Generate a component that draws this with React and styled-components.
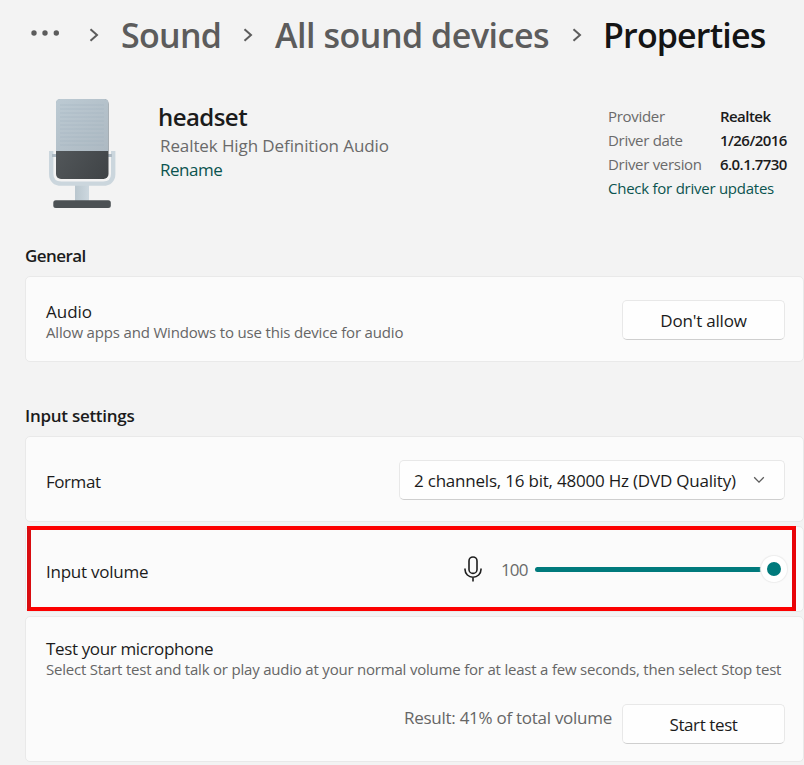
import styled, { createGlobalStyle } from "styled-components";

function App() {
    return (
        <>
            <GlobalStyle/>
            <Page>
            <Breadcrumb>
                <Dots viewBox="0 0 30 6">
                    <circle cx="3" cy="3" r="2.7"/>
                    <circle cx="14" cy="3" r="2.7"/>
                    <circle cx="25.3" cy="3" r="2.7"/>
                </Dots>
                <Separator $left={28}/>
                <Crumb $left={22} $width={101} $track={-0.7}>Sound</Crumb>
                <Separator $left={21}/>
                <Crumb $left={22} $width={276} $track={-0.47}>All sound devices</Crumb>
                <Separator $left={21}/>
                <Crumb $left={21} $width={180} $track={-0.85} $current>Properties</Crumb>
            </Breadcrumb>

            <Device>
                <MicrophoneArt/>
                <DeviceInfo>
                    <DeviceName>headset</DeviceName>
                    <DeviceModel>Realtek High Definition Audio</DeviceModel>
                    <Rename>Rename</Rename>
                </DeviceInfo>
                <Driver>
                    <DriverLabel>Provider</DriverLabel>
                    <DriverValue>Realtek</DriverValue>
                    <DriverLabel>Driver date</DriverLabel>
                    <DriverValue>1/26/2016</DriverValue>
                    <DriverLabel>Driver version</DriverLabel>
                    <DriverValue>6.0.1.7730</DriverValue>
                    <DriverLink>Check for driver updates</DriverLink>
                </Driver>
            </Device>

            <SectionTitle $track={-0.55}>General</SectionTitle>
            <Card>
                <Labels>
                    <Label>Audio</Label>
                    <Hint $track={-0.17}>Allow apps and Windows to use this device for audio</Hint>
                </Labels>
                <Button $track={-0.2}>Don't allow</Button>
            </Card>

            <SectionTitle $top={42} $track={-0.27}>Input settings</SectionTitle>
            <Card>
                <RowLabel $track={-0.45}>Format</RowLabel>
                <Select>
                    2 channels, 16 bit, 48000 Hz (DVD Quality)
                    <Chevron viewBox="0 0 12 8">
                        <path d="M1.2 1.3 6 6.1l4.8-4.8"/>
                    </Chevron>
                </Select>
            </Card>
            <Card $top={4}>
                <RowLabel $track={-0.25}>Input volume</RowLabel>
                <Volume>
                    <MicIcon viewBox="0 0 18 26">
                        <rect x="5" y="1" width="8" height="16.4" rx="4"/>
                        <path d="M1 12.6v1a8 7.6 0 0 0 16 0v-1M9 21.4v4"/>
                    </MicIcon>
                    <VolumeValue>100</VolumeValue>
                    <Track/>
                    <Thumb/>
                </Volume>
                <Highlight/>
            </Card>
            <TestCard>
                <Label $track={-0.36}>Test your microphone</Label>
                <Hint $track={-0.205}>Select Start test and talk or play audio at your normal volume for at least a few seconds, then select Stop test</Hint>
                <TestRow>
                    <Result>Result: 41% of total volume</Result>
                    <Button $track={-0.4}>Start test</Button>
                </TestRow>
            </TestCard>
            </Page>
        </>
    )
}

function Separator({ $left }) {
    return (
        <SeparatorIcon $left={$left} viewBox="0 0 10 14">
            <path d="M1.5 1.2 8 7l-6.500 5.800"/>
        </SeparatorIcon>
    )
}

function MicrophoneArt() {
    return (
        <Art viewBox="0 0 68 112">
            <defs>
                <linearGradient id="grille" x1="0" y1="0" x2="1" y2="1">
                    <stop offset="0" stopColor="#bccad3"/>
                    <stop offset="1" stopColor="#adb9c2"/>
                </linearGradient>
                <linearGradient id="body" x1="0" y1="0" x2="1" y2="1">
                    <stop offset="0" stopColor="#5b6063"/>
                    <stop offset="1" stopColor="#3f4346"/>
                </linearGradient>
                <linearGradient id="stem" x1="0" y1="0" x2="1" y2="0">
                    <stop offset="0" stopColor="#b9c6ce"/>
                    <stop offset="1" stopColor="#cdd8df"/>
                </linearGradient>
            </defs>
            <rect x="27" y="86" width="14" height="17" fill="url(#stem)"/>
            <path d="M3.200 53v23c0 6 4 9.600 10 9.600h42c6 0 10-3.600 10-9.600V53" fill="none" stroke="#cbd6dd" strokeWidth="4.400"/>
            <path d="M4 57.500h5M59 57.500h5" stroke="#aebac3" strokeWidth="3"/>
            <rect x="8" y="1" width="52.500" height="80" rx="5" fill="url(#body)"/>
            <path d="M8 53V5a4 4 0 0 1 4-4h44.500a4 4 0 0 1 4 4v48z" fill="url(#grille)"/>
            <path
                d="M12 7h44M12 11h44M12 15h44M12 19h44M12 23h44M12 27h44M12 31h44M12 35h44M12 39h44M12 43h44M12 47h44"
                stroke="#9eb0be"
                strokeWidth="1"
                opacity="0.400"
            />
            <rect x="5.300" y="102.300" width="57.500" height="7.800" rx="2.500" fill="#4c5154"/>
        </Art>
    )
}

const GlobalStyle = createGlobalStyle`
* {
box-sizing: border-box;
}
body {
margin: 0;
background: #f3f3f3;
font-family: "Open Sans", "Noto Sans", sans-serif;
}
`;

const Page = styled.div`
height: 765px;
padding-left: 25px;
overflow: hidden;
color: #1b1b1b;
white-space: nowrap;
`;

const Breadcrumb = styled.div`
height: 98px;
padding: 14px 0 0 6px;
display: flex;
align-items: flex-start;
`;

const Dots = styled.svg`
width: 30px;
height: 6px;
margin-top: 16px;
fill: #5c5c5c;
`;

const SeparatorIcon = styled.svg`
width: 10px;
height: 14px;
margin: 14px 0 0 ${(props) => props.$left}px;
fill: none;
stroke: #5c5c5c;
stroke-width: 2;
flex-shrink: 0;
`;

const Crumb = styled.span`
width: ${(props) => props.$width}px;
margin-left: ${(props) => props.$left}px;
flex-shrink: 0;
font-size: 34px;
font-weight: 600;
line-height: 42px;
letter-spacing: ${(props) => props.$track}px;
color: ${(props) => (props.$current ? "#141414" : "#5c5c5c")};
`;

const Device = styled.div`
height: 145px;
display: flex;
`;

const Art = styled.svg`
width: 68px;
height: 112px;
margin-left: 23px;
flex-shrink: 0;
`;

const DeviceInfo = styled.div`
width: 448px;
padding: 4px 0 0 44px;
display: flex;
flex-direction: column;
flex-shrink: 0;
`;

const DeviceName = styled.span`
margin-left: -2px;
font-size: 24px;
font-weight: 600;
line-height: 30px;
letter-spacing: -0.55px;
`;

const DeviceModel = styled.span`
margin-top: 2px;
font-size: 17px;
line-height: 24px;
letter-spacing: -0.1px;
color: #6a6a6a;
`;

const Rename = styled.span`
font-size: 17px;
line-height: 24px;
letter-spacing: -0.5px;
color: #0b544f;
`;

const Driver = styled.div`
padding-top: 6px;
margin-left: 44px;
display: grid;
grid-template-columns: 112px auto;
grid-auto-rows: 24px;
line-height: 24px;
font-size: 15px;
`;

const DriverLabel = styled.span`
letter-spacing: -0.3px;
color: #6a6a6a;
`;

const DriverValue = styled.span`
font-weight: 600;
letter-spacing: -0.55px;
`;

const DriverLink = styled.span`
grid-column: 1 / 3;
letter-spacing: -0.25px;
color: #0b544f;
`;

const SectionTitle = styled.h2`
margin: ${(props) => props.$top || 1}px 0 8px;
font-size: 17px;
font-weight: 600;
line-height: 24px;
letter-spacing: ${(props) => props.$track}px;
`;

const Card = styled.div`
position: relative;
height: 86px;
margin-top: ${(props) => props.$top || 0}px;
padding: 2px 18px 0 20px;
display: flex;
align-items: center;
justify-content: space-between;
background: #fbfbfb;
border: 1px solid #e9e9e9;
border-radius: 5px;
`;

const Labels = styled.div`
padding-top: 3px;
display: flex;
flex-direction: column;
`;

const Label = styled.span`
font-size: 17px;
line-height: 22px;
letter-spacing: ${(props) => props.$track || 0}px;
`;

const RowLabel = styled(Label)`
padding-top: 4px;
`;

const Hint = styled.span`
margin-top: -1px;
font-size: 15px;
line-height: 20px;
letter-spacing: ${(props) => props.$track || 0}px;
color: #666;
`;

const Button = styled.button`
width: 163px;
height: 40px;
padding: 0;
background: #fefefe;
border: 1px solid #e8e8e8;
border-bottom-color: #cfcfcf;
border-radius: 5px;
font-family: inherit;
font-size: 17px;
letter-spacing: ${(props) => props.$track || 0}px;
color: #1b1b1b;
`;

const Select = styled.div`
width: 386px;
height: 40px;
padding: 0 19px 0 14px;
display: flex;
align-items: center;
justify-content: space-between;
background: #fefefe;
border: 1px solid #e8e8e8;
border-bottom-color: #cfcfcf;
border-radius: 5px;
font-size: 17px;
letter-spacing: -0.21px;
`;

const Chevron = styled.svg`
width: 12px;
height: 8px;
fill: none;
stroke: #5c5c5c;
stroke-width: 1.3;
`;

const Volume = styled.div`
margin: -2px -2px 0 0;
display: flex;
align-items: center;
`;

const MicIcon = styled.svg`
width: 18px;
height: 26px;
fill: none;
stroke: #1f1f1f;
stroke-width: 1.6;
`;

const VolumeValue = styled.span`
width: 34px;
margin-left: 19px;
font-size: 17px;
letter-spacing: -0.9px;
color: #6a6a6a;
`;

const Track = styled.div`
width: 226px;
height: 5px;
background: #007a7c;
border-radius: 3px 0 0 3px;
`;

const Thumb = styled.div`
width: 26px;
height: 26px;
background: #007a7c;
border: 6px solid #fff;
border-radius: 50%;
box-shadow: 0 0 1px 1px #ededed;
`;

// marker frame drawn over the volume row
const Highlight = styled.div`
position: absolute;
top: -1px;
left: 1px;
width: 769px;
height: 85px;
border: 4px solid #fc0000;
border-left-color: #d90c10;
border-right-color: #e80408;
`;

const TestCard = styled.div`
height: 146px;
margin-top: 4px;
padding: 21px 18px 0 20px;
display: flex;
flex-direction: column;
background: #fbfbfb;
border: 1px solid #e9e9e9;
border-radius: 5px;
`;

const TestRow = styled.div`
margin-top: 25px;
display: flex;
justify-content: flex-end;
`;

const Result = styled.span`
margin-right: 10px;
font-size: 17px;
line-height: 28px;
letter-spacing: -0.27px;
color: #666;
`;

export default App
